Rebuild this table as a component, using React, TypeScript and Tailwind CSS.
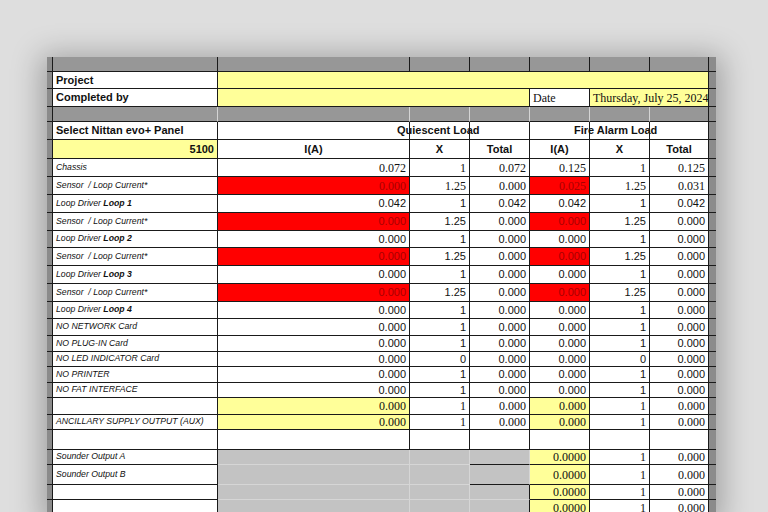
import React from 'react';

const SANS = "font-['Liberation_Sans',Arial,sans-serif]";
const SERIF = "font-['Liberation_Serif','Times_New_Roman',serif]";
const DARK = 'border-r border-b border-[#1a1a1a]';

const W = {
  A: 'w-[165px]',
  B: 'w-[192px]',
  C: 'w-[60px]',
  D: 'w-[60px]',
  E: 'w-[60px]',
  F: 'w-[60px]',
  G: 'w-[59px]',
};

function Cell({
  w,
  bg = 'bg-white',
  b = DARK,
  cls = '',
  children,
}: {
  w: string;
  bg?: string;
  b?: string;
  cls?: string;
  children?: React.ReactNode;
}) {
  return (
    <div className={`${w} shrink-0 ${bg} ${b} flex items-center whitespace-nowrap ${cls}`}>{children}</div>
  );
}

function LStrip() {
  return <div className="w-[6px] shrink-0 bg-[#8b8b8b] border-r border-b border-[#1a1a1a]" />;
}
function RStrip() {
  return <div className="w-[7px] shrink-0 bg-[#8b8b8b] border-b border-[#1a1a1a]" />;
}

const NUM_R = `${SERIF} text-[12px] text-[#111] justify-end pr-[3px]`;
const NUM_S = `${SANS} text-[11px] text-[#111] justify-end pr-[3px]`;
const LABEL = `${SANS} text-[8.7px] italic text-[#111] pl-[3px] whitespace-pre`;
const HEAD = `${SANS} text-[11px] font-bold text-[#111]`;

const sensor = <span>{'Sensor  / Loop Current*'}</span>;
const loop = (n: string) => (
  <span>
    {'Loop Driver '}
    <b>{'Loop ' + n}</b>
  </span>
);

type Row = {
  label: React.ReactNode;
  h: string;
  v: string[];
  f: 'r' | 's';
  red?: boolean;
  yellow?: boolean;
};

const rows: Row[] = [
  { label: 'Chassis', h: 'h-[18px]', v: ['0.072', '1', '0.072', '0.125', '1', '0.125'], f: 'r' },
  { label: sensor, h: 'h-[18px]', v: ['0.000', '1.25', '0.000', '0.025', '1.25', '0.031'], f: 'r', red: true },
  { label: loop('1'), h: 'h-[18px]', v: ['0.042', '1', '0.042', '0.042', '1', '0.042'], f: 's' },
  { label: sensor, h: 'h-[18px]', v: ['0.000', '1.25', '0.000', '0.000', '1.25', '0.000'], f: 's', red: true },
  { label: loop('2'), h: 'h-[17px]', v: ['0.000', '1', '0.000', '0.000', '1', '0.000'], f: 's' },
  { label: sensor, h: 'h-[18px]', v: ['0.000', '1.25', '0.000', '0.000', '1.25', '0.000'], f: 's', red: true },
  { label: loop('3'), h: 'h-[18px]', v: ['0.000', '1', '0.000', '0.000', '1', '0.000'], f: 's' },
  { label: sensor, h: 'h-[18px]', v: ['0.000', '1.25', '0.000', '0.000', '1.25', '0.000'], f: 's', red: true },
  { label: loop('4'), h: 'h-[17px]', v: ['0.000', '1', '0.000', '0.000', '1', '0.000'], f: 's' },
  { label: 'NO NETWORK Card', h: 'h-[17px]', v: ['0.000', '1', '0.000', '0.000', '1', '0.000'], f: 's' },
  { label: 'NO PLUG-IN Card', h: 'h-[16px]', v: ['0.000', '1', '0.000', '0.000', '1', '0.000'], f: 's' },
  { label: 'NO LED INDICATOR Card', h: 'h-[15px]', v: ['0.000', '0', '0.000', '0.000', '0', '0.000'], f: 's' },
  { label: 'NO PRINTER', h: 'h-[16px]', v: ['0.000', '1', '0.000', '0.000', '1', '0.000'], f: 's' },
  { label: 'NO FAT INTERFACE', h: 'h-[15px]', v: ['0.000', '1', '0.000', '0.000', '1', '0.000'], f: 's' },
  { label: '', h: 'h-[17px]', v: ['0.000', '1', '0.000', '0.000', '1', '0.000'], f: 'r', yellow: true },
  { label: 'ANCILLARY SUPPLY OUTPUT (AUX)', h: 'h-[15px]', v: ['0.000', '1', '0.000', '0.000', '1', '0.000'], f: 'r', yellow: true },
];

function DataRow({ r }: { r: Row }) {
  const num = r.f === 'r' ? NUM_R : NUM_S;
  const hi = r.red ? 'bg-[#ff0000]' : r.yellow ? 'bg-[#ffff99]' : 'bg-white';
  const hiText = r.red ? 'text-[#a80000]' : '';
  return (
    <div className={`flex ${r.h}`}>
      <LStrip />
      <Cell w={W.A} cls={LABEL}>{r.label}</Cell>
      <Cell w={W.B} bg={hi} cls={`${num} ${hiText}`}>{r.v[0]}</Cell>
      <Cell w={W.C} cls={num}>{r.v[1]}</Cell>
      <Cell w={W.D} cls={num}>{r.v[2]}</Cell>
      <Cell w={W.E} bg={hi} cls={`${num} ${hiText}`}>{r.v[3]}</Cell>
      <Cell w={W.F} cls={num}>{r.v[4]}</Cell>
      <Cell w={W.G} cls={num}>{r.v[5]}</Cell>
      <RStrip />
    </div>
  );
}

const GRAY_LIGHT = 'border-r border-b border-[#d6d6d6]';

function SounderRow({ label, h, dDark }: { label: string; h: string; dDark?: boolean }) {
  return (
    <div className={`flex ${h}`}>
      <LStrip />
      <Cell w={W.A} cls={LABEL}>{label}</Cell>
      <Cell w={W.B} bg="bg-[#c3c3c3]" b={GRAY_LIGHT} />
      <Cell w={W.C} bg="bg-[#c3c3c3]" b={GRAY_LIGHT} />
      <Cell
        w={W.D}
        bg="bg-[#c3c3c3]"
        b={dDark ? 'border-r border-b border-r-[#d6d6d6] border-b-[#1a1a1a]' : 'border-r border-b border-r-[#1a1a1a] border-b-[#d6d6d6]'}
      />
      <Cell w={W.E} bg="bg-[#ffff99]" cls={NUM_R}>0.0000</Cell>
      <Cell w={W.F} cls={NUM_R}>1</Cell>
      <Cell w={W.G} cls={NUM_R}>0.000</Cell>
      <RStrip />
    </div>
  );
}

export default function App() {
  const grayDark = 'bg-[#979797]';
  const lightV = 'border-r border-b border-r-[#d4d4d4] border-b-[#1a1a1a]';
  const clear = 'bg-transparent';
  return (
    <div className="w-[768px] h-[512px] overflow-hidden bg-[#dedede] pt-[57px] pl-[47px]">
      <div className="w-[669px] shadow-[0_4px_28px_6px_rgba(0,0,0,0.28)]">
        {/* top gray header row */}
        <div className="flex h-[15px]">
          <LStrip />
          <Cell w={W.A} bg={grayDark} />
          <Cell w={W.B} bg={grayDark} />
          <Cell w={W.C} bg={grayDark} />
          <Cell w={W.D} bg={grayDark} />
          <Cell w={W.E} bg={grayDark} />
          <Cell w={W.F} bg={grayDark} />
          <Cell w={W.G} bg={grayDark} />
          <RStrip />
        </div>
        {/* Project */}
        <div className="flex h-[17px]">
          <LStrip />
          <Cell w={W.A} cls={`${HEAD} pl-[3px]`}>Project</Cell>
          <Cell w="w-[491px]" bg="bg-[#ffff99]" />
          <RStrip />
        </div>
        {/* Completed by */}
        <div className="flex h-[18px]">
          <LStrip />
          <Cell w={W.A} cls={`${HEAD} pl-[3px]`}>Completed by</Cell>
          <Cell w="w-[312px]" bg="bg-[#ffff99]" />
          <Cell w={W.E} cls={`${SERIF} text-[12px] text-[#111] pl-[3px]`}>Date</Cell>
          <Cell w="w-[119px]" bg="bg-[#ffff99]" cls={`${SERIF} text-[12px] text-[#111] pl-[3px] overflow-hidden`}>
            Thursday, July 25, 2024
          </Cell>
          <RStrip />
        </div>
        {/* second gray row */}
        <div className="flex h-[15px]">
          <LStrip />
          <Cell w={W.A} bg={grayDark} b={lightV} />
          <Cell w={W.B} bg={grayDark} b={lightV} />
          <Cell w={W.C} bg={grayDark} b={lightV} />
          <Cell w={W.D} bg={grayDark} b={lightV} />
          <Cell w={W.E} bg={grayDark} b={lightV} />
          <Cell w={W.F} bg={grayDark} b={lightV} />
          <Cell w={W.G} bg={grayDark} b={DARK} />
          <RStrip />
        </div>
        {/* Select panel row: titles overflow across the next cells, as in the sheet */}
        <div className="flex h-[18px] bg-white">
          <LStrip />
          <Cell w={W.A} cls={`${HEAD} pl-[3px]`}>Select Nittan evo+ Panel</Cell>
          <Cell w={W.B} bg={clear} cls={`${HEAD} pl-[179px]`}>Quiescent Load</Cell>
          <Cell w={W.C} bg={clear} />
          <Cell w={W.D} bg={clear} />
          <Cell w={W.E} bg={clear} cls={`${HEAD} pl-[44px]`}>Fire Alarm Load</Cell>
          <Cell w={W.F} bg={clear} />
          <Cell w={W.G} bg={clear} />
          <RStrip />
        </div>
        {/* 5100 header row */}
        <div className="flex h-[19px]">
          <LStrip />
          <Cell w={W.A} bg="bg-[#ffff99]" cls={`${HEAD} justify-end pr-[3px]`}>5100</Cell>
          <Cell w={W.B} cls={`${HEAD} justify-center`}>I(A)</Cell>
          <Cell w={W.C} cls={`${HEAD} justify-center`}>X</Cell>
          <Cell w={W.D} cls={`${HEAD} justify-center`}>Total</Cell>
          <Cell w={W.E} cls={`${HEAD} justify-center`}>I(A)</Cell>
          <Cell w={W.F} cls={`${HEAD} justify-center`}>X</Cell>
          <Cell w={W.G} cls={`${HEAD} justify-center`}>Total</Cell>
          <RStrip />
        </div>
        {rows.map((r, i) => (
          <DataRow key={i} r={r} />
        ))}
        {/* empty row */}
        <div className="flex h-[20px]">
          <LStrip />
          <Cell w={W.A} />
          <Cell w={W.B} />
          <Cell w={W.C} />
          <Cell w={W.D} />
          <Cell w={W.E} />
          <Cell w={W.F} />
          <Cell w={W.G} />
          <RStrip />
        </div>
        <SounderRow label="Sounder Output A" h="h-[15px]" dDark />
        <SounderRow label="Sounder Output B" h="h-[20px]" dDark />
        <SounderRow label="" h="h-[15px]" />
        <SounderRow label="" h="h-[16px]" />
      </div>
    </div>
  );
}
